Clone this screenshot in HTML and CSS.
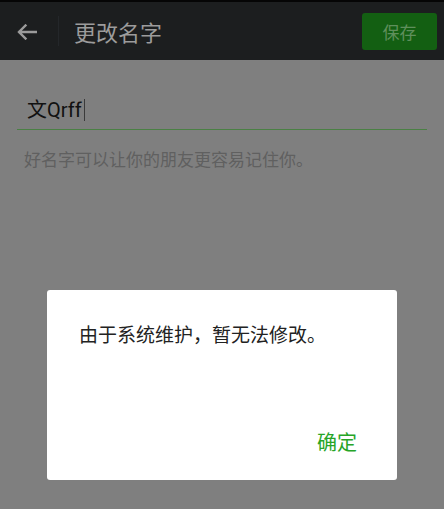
FILE: index.html
```html
<!DOCTYPE html>
<html lang="zh-CN">
<head>
<meta charset="utf-8">
<title>更改名字</title>
<link rel="stylesheet" href="styles.css">
</head>
<body>
<div class="screen">
  <header class="topbar">
    <div class="back">
      <svg width="20" height="16" viewBox="0 0 20 16" aria-hidden="true">
        <path d="M19 8H2.5M8.5 1.5L2 8l6.5 6.5" fill="none" stroke="#9b9b9b" stroke-width="2.4" stroke-linecap="square"/>
      </svg>
    </div>
    <div class="sep"></div>
    <h1 class="title">更改名字</h1>
    <button class="save">保存</button>
  </header>
  <main class="content">
    <div class="field">
      <span class="value">文Qrff</span><span class="caret"></span>
    </div>
    <p class="hint">好名字可以让你的朋友更容易记住你。</p>
  </main>
  <div class="dialog">
    <p class="msg">由于系统维护，暂无法修改。</p>
    <div class="actions"><span class="ok">确定</span></div>
  </div>
</div>
</body>
</html>
```
FILE: styles.css
```css
* { box-sizing: border-box; }
html, body { margin: 0; padding: 0; }
body {
  width: 444px;
  height: 509px;
  overflow: hidden;
  background: #7f7f7f;
  font-family: Roboto, "Noto Sans CJK SC", sans-serif;
}
.screen {
  position: relative;
  width: 444px;
  height: 509px;
  background: #7f7f7f;
}
.topbar {
  height: 60px;
  border-top: 2px solid #050505;
  background: #1c1e1f;
  display: flex;
  align-items: center;
}
.back {
  width: 58px;
  display: flex;
  justify-content: flex-start;
  padding-left: 17px;
  padding-top: 2px;
}
.back svg { display: block; }
.sep {
  width: 1px;
  height: 30px;
  background: #24272a;
}
.title {
  margin: 0 0 0 15px;
  font-family: "Noto Sans CJK SC", sans-serif;
  font-weight: 400;
  font-size: 22px;
  color: #9c9c9c;
  flex: 1;
  letter-spacing: 0;
}
.save {
  margin-right: 7px;
  width: 75px;
  height: 37px;
  border: 0;
  border-radius: 3px;
  background: #135f12;
  color: #5f8f5c;
  font-family: "Noto Sans CJK SC", sans-serif;
  font-size: 17px;
  padding: 0;
  margin-top: 1px;
}
.content {
  padding: 35px 17px 0 17px;
}
.field {
  height: 35px;
  border-bottom: 1px solid #4a8044;
  padding-left: 10px;
  display: flex;
  align-items: flex-start;
}
.value {
  font-family: Roboto, "Noto Sans CJK SC", sans-serif;
  font-size: 20px;
  line-height: 30px;
  color: #111;
}
.caret {
  width: 1px;
  height: 22px;
  margin-top: 4px;
  margin-left: 2px;
  background: #3a3a3a;
}
.hint {
  margin: 16px 0 0 7px;
  font-family: "Noto Sans CJK SC", sans-serif;
  font-size: 17px;
  line-height: 26px;
  color: #606060;
}
.dialog {
  position: absolute;
  left: 47px;
  top: 290px;
  width: 350px;
  height: 190px;
  background: #fff;
  border-radius: 3px;
  padding: 31px 20px 0 32px;
  display: flex;
  flex-direction: column;
}
.msg {
  margin: 0;
  font-family: "Noto Sans CJK SC", sans-serif;
  font-size: 19px;
  line-height: 26px;
  color: #222;
}
.actions {
  margin-top: auto;
  margin-bottom: 24px;
  display: flex;
  justify-content: flex-end;
  padding-right: 20px;
}
.ok {
  font-family: "Noto Sans CJK SC", sans-serif;
  font-size: 20px;
  line-height: 28px;
  color: #27a527;
}
```
